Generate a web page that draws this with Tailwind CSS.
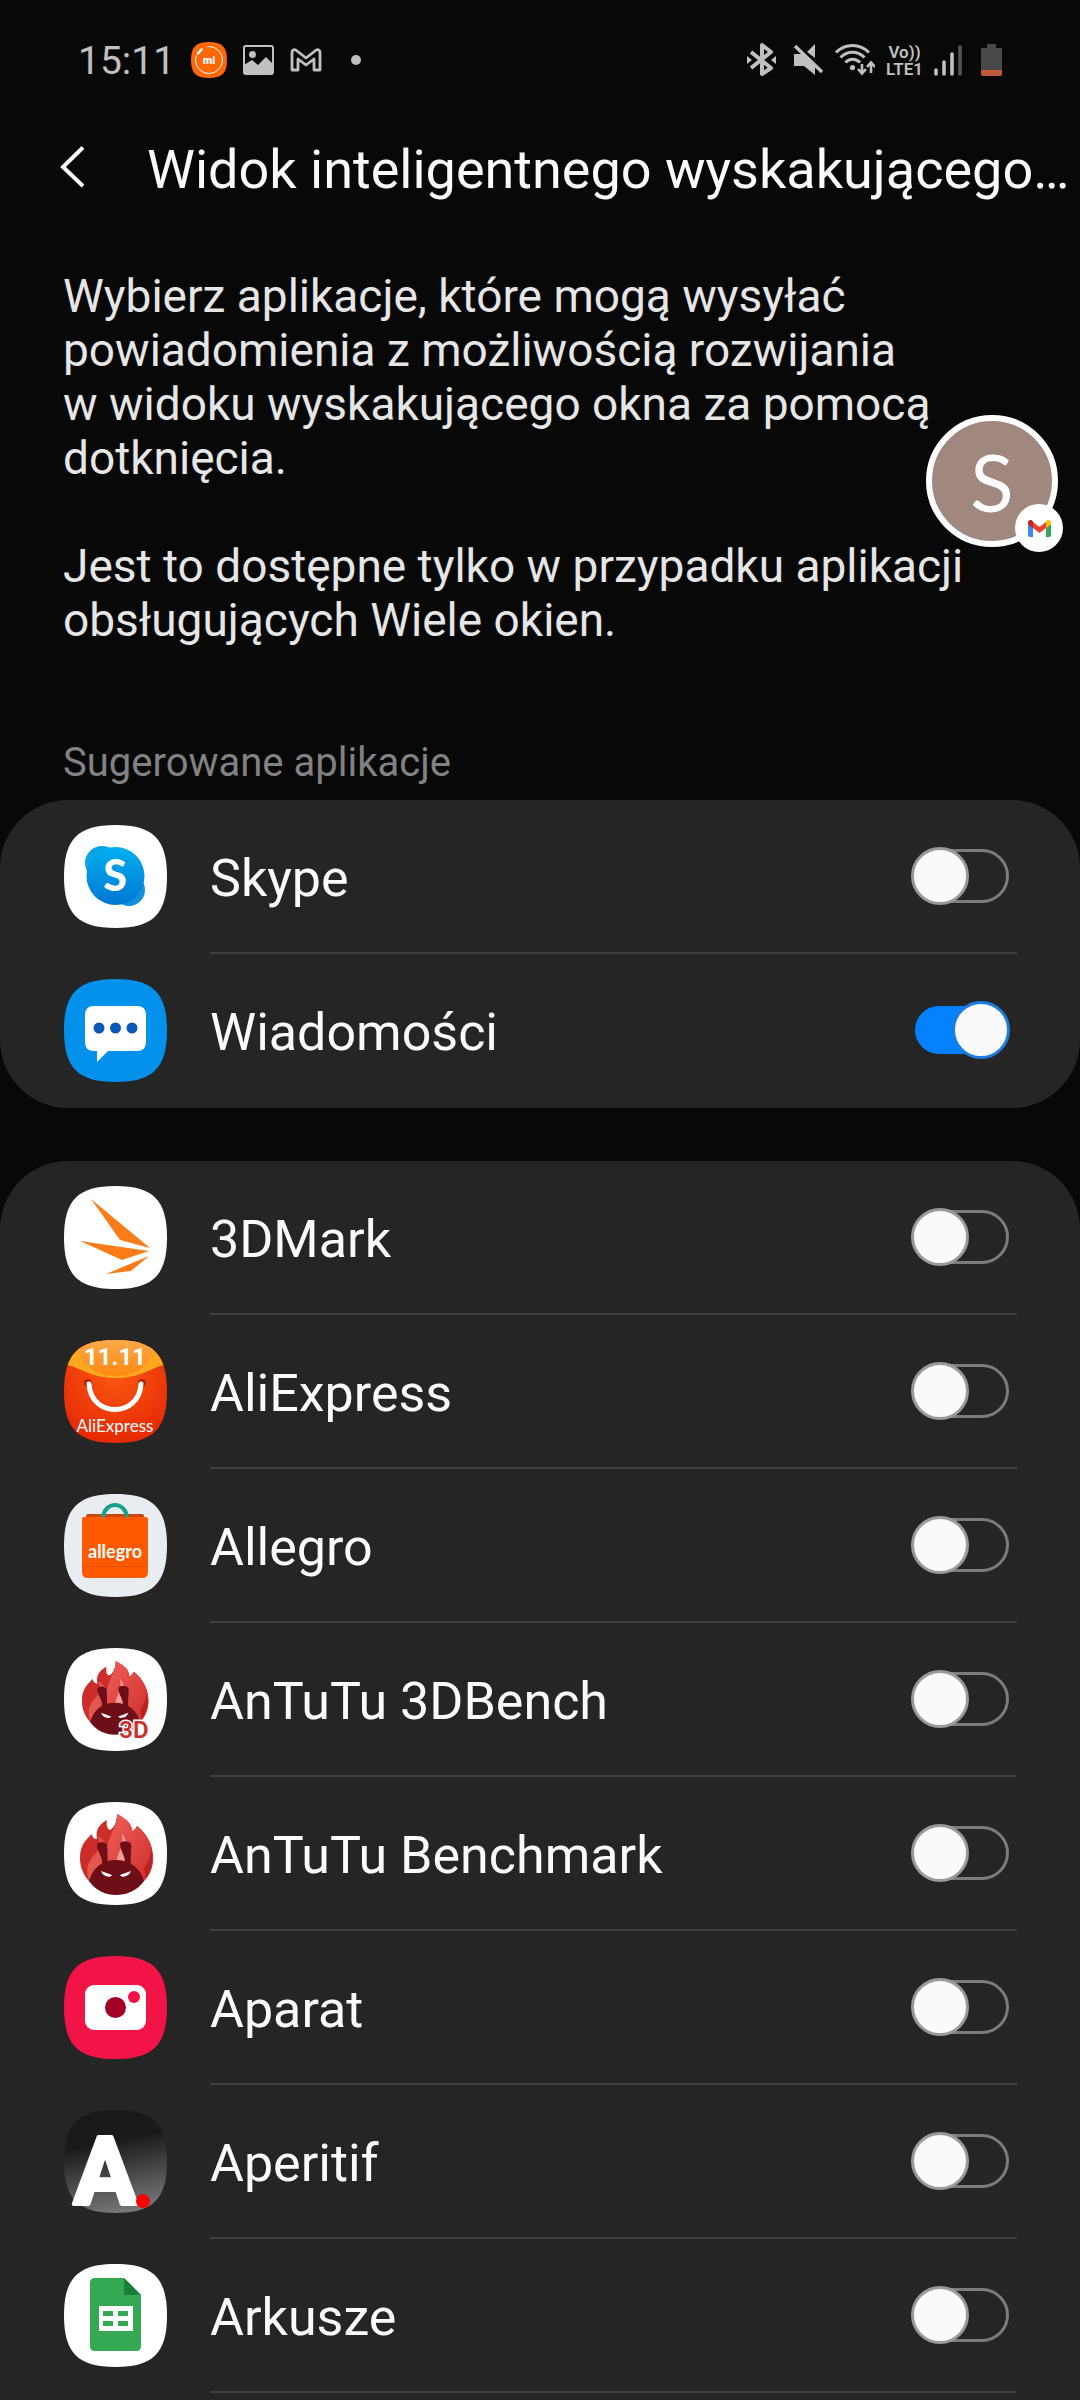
<!DOCTYPE html>
<html lang="pl">

<head>
  <meta charset="UTF-8">
  <meta name="viewport" content="width=device-width, initial-scale=1.0">
  <title>Widok inteligentnego wyskakującego okna</title>
  <script src="https://cdn.jsdelivr.net/npm/@tailwindcss/browser@4"></script>
</head>

<body class="bg-[#080808] font-[Roboto,sans-serif] text-[#fafafa]">
  <!-- Shared shapes -->
  <svg class="absolute w-0 h-0" aria-hidden="true">
    <defs>
      <path id="squircle" d="M51.5 0C89 0 103 14 103 51.5S89 103 51.5 103 0 89 0 51.5 14 0 51.5 0Z" />
      <clipPath id="squircleClip"><use href="#squircle" /></clipPath>
      <linearGradient id="flameRight" x1="0" y1="0" x2="1" y2="1">
        <stop offset="0" stop-color="#f0605a" />
        <stop offset="1" stop-color="#cf2f2c" />
      </linearGradient>
      <g id="antutu">
        <path fill="#cc2d29" d="M53 12C62 17 68 21 68 29C71 28 72 26 73 24C82 31 89 42 89 56C89 66 85 74 79 80H26C20 74 16 66 16 56C16 45 20 39 28 32C28 35 30 37 33 37C31 27 36 22 43 18C42 23 43 27 46 28C50 26 53 20 53 12Z" />
        <path fill="url(#flameRight)" d="M53 12C62 17 68 21 68 29C71 28 72 26 73 24C82 31 89 42 89 56C89 66 85 74 79 80H46C34 62 44 42 48 30C51 25 53 20 53 12Z" />
        <path fill="#e4574f" d="M26 80C20 66 25 58 33 50C36 45 36 40 34 34C44 40 47 50 42 62Z" />
        <path fill="#f29c95" d="M52 60C54 50 60 44 58 31C64 42 66 52 60 60Z" />
        <path fill="#b8221f" d="M80 66C86 58 88 50 86 44C90 54 89 66 82 76Z" />
        <path fill="#6e0f18" d="M25 79C29 65 39 58 52 58S76 65 80 79C73 89 62 93 52 93S32 89 25 79Z" />
        <path fill="#6e0f18" d="M33 43C33 39 42 39 43 43C44 49 43 55 44 62H38C39 54 33 50 33 43ZM56 42C57 38 66 39 67 42C68 48 66 54 67 62H61C62 54 56 49 56 42Z" />
        <path fill="#fff" d="M37 69L48 73C47 76 39 75 37 69ZM67 69L56 73C57 76 65 75 67 69Z" />
      </g>
    </defs>
  </svg>

  <div class="relative flex min-h-screen flex-col">
    <!-- Status bar -->
    <div class="flex h-[120px] items-center justify-between px-[78px] text-[#c0c0c0]">
      <div class="flex items-center gap-4">
        <span class="pt-[3px] text-[39px]">15:11</span>
        <svg class="h-9 w-9" viewBox="0 0 36 36">
          <path fill="#ff6709" d="M18 0C31 0 36 5 36 18S31 36 18 36 0 31 0 18 5 0 18 0Z" />
          <circle cx="18" cy="18" r="13.500" fill="none" stroke="#fff" stroke-width="1" />
          <path stroke="#ff6709" stroke-width="5" d="M5 13L15 3" />
          <path stroke="#fff" stroke-width="2.600" stroke-linecap="round" d="M7 11.500L10.500 7.500" />
          <text x="18" y="22" text-anchor="middle" fill="#fff" font-size="11" font-weight="900">mi</text>
        </svg>
        <svg class="h-[30px] w-[31px]" viewBox="0 0 31 30">
          <rect x="1" y="1" width="29" height="28" rx="2" fill="none" stroke="currentColor" stroke-width="2" />
          <circle cx="9.500" cy="9.500" r="3.500" fill="currentColor" />
          <path fill="currentColor" d="M1 20L9 15L15 20L23 12L30 19V29H1Z" />
        </svg>
        <svg class="h-6 w-8" viewBox="0 0 32 24">
          <path fill="none" stroke="currentColor" stroke-width="2.800" stroke-linejoin="round" d="M2 22V5C2 1 5 1 7 3L16 10L25 3C27 1 30 1 30 5V22H24V11L16 17L8 11V22Z" />
        </svg>
        <svg class="h-[10px] w-9" viewBox="0 0 36 10"><circle cx="18" cy="5" r="5" fill="currentColor" /></svg>
      </div>
      <div class="flex items-center gap-[10px]">
        <svg class="h-[34px] w-[34px]" viewBox="0 0 34 34">
          <path fill="none" stroke="currentColor" stroke-width="4" stroke-linejoin="round" d="M4 9L24 25L15 31V2L24 9L4 25" />
          <path fill="currentColor" d="M0 13L5 17L0 21ZM29 13V21L24 17Z" />
        </svg>
        <svg class="h-[34px] w-[34px]" viewBox="0 0 34 34">
          <path fill="currentColor" d="M3 11H11L24 24V32L13 23H3ZM24 1V15L16 9Z" />
          <path stroke="currentColor" stroke-width="3.400" d="M4 3L31 29" />
        </svg>
        <svg class="h-[34px] w-10" viewBox="0 0 40 34">
          <g fill="none" stroke="currentColor" stroke-width="3">
            <path d="M1 9.500C10 0 25 0 34 9.500M5.500 14.500C12 7.500 23 7.500 29.500 14.500M10.500 19.500C14 15 21 15 25 19.500" />
          </g>
          <circle cx="17.500" cy="24.500" r="2.600" fill="currentColor" />
          <path fill="none" stroke="currentColor" stroke-width="2.600" d="M27 21V30M23 26L27 30.500L31 26M36 30V20M32 24L36 19.500L40 24" />
        </svg>
        <div class="w-[39px] pt-[2px] text-center text-[17px] leading-[17px] font-semibold">Vo))<br>LTE1</div>
        <svg class="h-[34px] w-[37px]" viewBox="0 0 37 34">
          <path stroke="currentColor" stroke-width="3.600" stroke-linecap="round" d="M2 27V31M10 19V31M18 11V31" />
          <path stroke="#555" stroke-width="3.600" stroke-linecap="round" d="M26 4V31" />
        </svg>
        <svg class="h-[34px] w-[21px]" viewBox="0 0 21 34">
          <path fill="#484848" d="M6 1H15V5H21V28H0V5H6Z" />
          <path fill="#c05a38" d="M0 27H21V31Q21 33 19 33H2Q0 33 0 31Z" />
        </svg>
      </div>
    </div>

    <!-- Title -->
    <header class="flex h-[98px] items-center gap-[27px] pr-2 pl-6">
      <button type="button" aria-label="Wstecz" class="flex h-24 w-24 shrink-0 items-center justify-center pb-1">
        <svg class="h-[42px] w-6" viewBox="0 0 24 42">
          <path fill="none" stroke="currentColor" stroke-width="4" d="M23 1.500L3 21L23 40" />
        </svg>
      </button>
      <h1 class="text-[54px] whitespace-nowrap">Widok inteligentnego wyskakującego…</h1>
    </header>

    <main class="flex grow flex-col">
      <div class="mt-[51px] px-[63px] text-[46px] leading-[54px] text-[#e6e6e6]">
        <p>Wybierz aplikacje, które mogą wysyłać powiadomienia z&nbsp;możliwością rozwijania w&nbsp;widoku wyskakującego okna za pomocą dotknięcia.</p>
        <p class="mt-[54px]">Jest to dostępne tylko w przypadku aplikacji obsługujących Wiele okien.</p>
      </div>

      <h2 class="mt-[92px] px-[63px] pb-[13px] text-[40px] leading-12 text-[#828282]">Sugerowane aplikacje</h2>

      <!-- Suggested apps -->
      <ul class="rounded-[68px] bg-[#252525]">
        <li class="flex h-[154px] items-center gap-[43px] pr-[63px] pl-16">
          <svg class="mb-[2px] h-[103px] w-[103px] shrink-0" viewBox="0 0 103 103">
            <defs>
              <linearGradient id="skype" x1="0" y1="0" x2="0" y2="1">
                <stop offset="0" stop-color="#00b0ee" />
                <stop offset="1" stop-color="#0076d4" />
              </linearGradient>
            </defs>
            <use href="#squircle" fill="#fff" />
            <circle cx="38" cy="38" r="17" fill="#0aa5e4" />
            <circle cx="65" cy="65" r="16" fill="#1191dc" />
            <circle cx="51.500" cy="51" r="29" fill="url(#skype)" />
            <text x="51" y="66" text-anchor="middle" fill="#fff" font-size="43" font-weight="900" font-family="Lato">S</text>
          </svg>
          <div class="flex h-full grow items-center justify-between border-b-2 border-[#3f3f3f] pr-2">
            <label for="skypeToggle" class="pt-[6px] text-[52px]">Skype</label>
            <input type="checkbox" role="switch" id="skypeToggle"
              class="relative h-[54px] w-[97px] appearance-none rounded-full border-3 border-[#7c7c7c] before:absolute before:-top-[5px] before:-left-1 before:h-[58px] before:w-[58px] before:rounded-full before:border-3 before:border-[#999] before:bg-[#fafafa] checked:border-transparent checked:bg-[#0381fe] checked:bg-clip-padding checked:before:left-[37px] checked:before:border-[#1c7ce0]">
          </div>
        </li>
        <li class="flex h-[154px] items-center gap-[43px] pr-[63px] pl-16">
          <svg class="mb-[2px] h-[103px] w-[103px] shrink-0" viewBox="0 0 103 103">
            <use href="#squircle" fill="#0391ec" />
            <path fill="#fff" d="M30 27H73Q82 27 82 36V63Q82 72 73 72H44L33 83V72H30Q21 72 21 63V36Q21 27 30 27Z" />
            <g fill="#0b58b8">
              <circle cx="35" cy="49" r="5.500" />
              <circle cx="51.500" cy="49" r="5.500" />
              <circle cx="68" cy="49" r="5.500" />
            </g>
          </svg>
          <div class="flex h-full grow items-center justify-between border-b-2 border-transparent pr-2">
            <label for="messagesToggle" class="pt-[6px] text-[52px]">Wiadomości</label>
            <input type="checkbox" role="switch" id="messagesToggle" checked
              class="relative h-[54px] w-[97px] appearance-none rounded-full border-3 border-[#7c7c7c] before:absolute before:-top-[5px] before:-left-1 before:h-[58px] before:w-[58px] before:rounded-full before:border-3 before:border-[#999] before:bg-[#fafafa] checked:border-transparent checked:bg-[#0381fe] checked:bg-clip-padding checked:before:left-[37px] checked:before:border-[#1c7ce0]">
          </div>
        </li>
      </ul>

      <!-- All apps -->
      <ul class="mt-[53px] grow rounded-t-[68px] bg-[#252525]">
        <li class="flex h-[154px] items-center gap-[43px] pr-[63px] pl-16">
          <svg class="mb-[2px] h-[103px] w-[103px] shrink-0" viewBox="0 0 103 103">
            <use href="#squircle" fill="#fff" />
            <path fill="#fb7d1a" d="M27 13L86 62L56 54ZM16 55L85 65L58 74ZM85 70L67 85L42 88Z" />
          </svg>
          <div class="flex h-full grow items-center justify-between border-b-2 border-[#3f3f3f] pr-2">
            <label for="threeDMarkToggle" class="pt-[6px] text-[52px]">3DMark</label>
            <input type="checkbox" role="switch" id="threeDMarkToggle"
              class="relative h-[54px] w-[97px] appearance-none rounded-full border-3 border-[#7c7c7c] before:absolute before:-top-[5px] before:-left-1 before:h-[58px] before:w-[58px] before:rounded-full before:border-3 before:border-[#999] before:bg-[#fafafa] checked:border-transparent checked:bg-[#0381fe] checked:bg-clip-padding checked:before:left-[37px] checked:before:border-[#1c7ce0]">
          </div>
        </li>
        <li class="flex h-[154px] items-center gap-[43px] pr-[63px] pl-16">
          <svg class="mb-[2px] h-[103px] w-[103px] shrink-0" viewBox="0 0 103 103">
            <defs>
              <radialGradient id="aliRed" cx=".5" cy=".3" r=".7">
                <stop offset="0" stop-color="#fb5a12" />
                <stop offset="1" stop-color="#e62a05" />
              </radialGradient>
              <linearGradient id="aliTop" x1="0" y1="0" x2="0" y2="1">
                <stop offset="0" stop-color="#fba84a" />
                <stop offset="1" stop-color="#fd8a10" />
              </linearGradient>
            </defs>
            <g clip-path="url(#squircleClip)">
              <path fill="url(#aliRed)" d="M0 0H103V103H0Z" />
              <path fill="#ffa71f" d="M0 0H103V25C92 24 80 38 52 38S12 24 0 25Z" />
              <path fill="url(#aliTop)" d="M10 0H93C88 20 78 36 52 36S16 20 10 0Z" />
            </g>
            <text x="51" y="25" text-anchor="middle" fill="#fff" font-size="24" font-weight="700">11.11</text>
            <circle cx="24" cy="43" r="4" fill="#b52206" />
            <circle cx="78" cy="43" r="4" fill="#b52206" />
            <path fill="none" stroke="#fff" stroke-width="5" stroke-linecap="round" d="M25 44C27 78 75 78 77 44" />
            <text x="51" y="92" text-anchor="middle" fill="#fff" font-size="17" font-family="Lato">AliExpress</text>
          </svg>
          <div class="flex h-full grow items-center justify-between border-b-2 border-[#3f3f3f] pr-2">
            <label for="aliToggle" class="pt-[6px] text-[52px]">AliExpress</label>
            <input type="checkbox" role="switch" id="aliToggle"
              class="relative h-[54px] w-[97px] appearance-none rounded-full border-3 border-[#7c7c7c] before:absolute before:-top-[5px] before:-left-1 before:h-[58px] before:w-[58px] before:rounded-full before:border-3 before:border-[#999] before:bg-[#fafafa] checked:border-transparent checked:bg-[#0381fe] checked:bg-clip-padding checked:before:left-[37px] checked:before:border-[#1c7ce0]">
          </div>
        </li>
        <li class="flex h-[154px] items-center gap-[43px] pr-[63px] pl-16">
          <svg class="mb-[2px] h-[103px] w-[103px] shrink-0" viewBox="0 0 103 103">
            <use href="#squircle" fill="#e9edf1" />
            <path fill="#c9480a" d="M22 22Q22 20 24 20H78Q80 20 80 22V26H22Z" />
            <path fill="#ff5a00" d="M18 25Q18 23 20 23H82Q84 23 84 25V78Q84 84 78 84H24Q18 84 18 78Z" />
            <path stroke="#e55100" d="M18 72.500H84" />
            <path fill="none" stroke="#17a08a" stroke-width="4" d="M39 23C41 7 61 7 63 23" />
            <text x="51" y="64" text-anchor="middle" fill="#fff" font-size="18" font-weight="700" font-family="Lato">allegro</text>
          </svg>
          <div class="flex h-full grow items-center justify-between border-b-2 border-[#3f3f3f] pr-2">
            <label for="allegroToggle" class="pt-[6px] text-[52px]">Allegro</label>
            <input type="checkbox" role="switch" id="allegroToggle"
              class="relative h-[54px] w-[97px] appearance-none rounded-full border-3 border-[#7c7c7c] before:absolute before:-top-[5px] before:-left-1 before:h-[58px] before:w-[58px] before:rounded-full before:border-3 before:border-[#999] before:bg-[#fafafa] checked:border-transparent checked:bg-[#0381fe] checked:bg-clip-padding checked:before:left-[37px] checked:before:border-[#1c7ce0]">
          </div>
        </li>
        <li class="flex h-[154px] items-center gap-[43px] pr-[63px] pl-16">
          <svg class="mb-[2px] h-[103px] w-[103px] shrink-0" viewBox="0 0 103 103">
            <use href="#squircle" fill="#fff" />
            <use href="#antutu" transform="translate(3.400 2) scale(.91)" />
            <text x="70" y="90" text-anchor="middle" fill="#cb2f2c" stroke="#fff" stroke-width="3" paint-order="stroke" font-size="24" font-weight="600">3D</text>
          </svg>
          <div class="flex h-full grow items-center justify-between border-b-2 border-[#3f3f3f] pr-2">
            <label for="antutu3dToggle" class="pt-[6px] text-[52px]">AnTuTu 3DBench</label>
            <input type="checkbox" role="switch" id="antutu3dToggle"
              class="relative h-[54px] w-[97px] appearance-none rounded-full border-3 border-[#7c7c7c] before:absolute before:-top-[5px] before:-left-1 before:h-[58px] before:w-[58px] before:rounded-full before:border-3 before:border-[#999] before:bg-[#fafafa] checked:border-transparent checked:bg-[#0381fe] checked:bg-clip-padding checked:before:left-[37px] checked:before:border-[#1c7ce0]">
          </div>
        </li>
        <li class="flex h-[154px] items-center gap-[43px] pr-[63px] pl-16">
          <svg class="mb-[2px] h-[103px] w-[103px] shrink-0" viewBox="0 0 103 103">
            <use href="#squircle" fill="#fff" />
            <use href="#antutu" />
          </svg>
          <div class="flex h-full grow items-center justify-between border-b-2 border-[#3f3f3f] pr-2">
            <label for="antutuToggle" class="pt-[6px] text-[52px]">AnTuTu Benchmark</label>
            <input type="checkbox" role="switch" id="antutuToggle"
              class="relative h-[54px] w-[97px] appearance-none rounded-full border-3 border-[#7c7c7c] before:absolute before:-top-[5px] before:-left-1 before:h-[58px] before:w-[58px] before:rounded-full before:border-3 before:border-[#999] before:bg-[#fafafa] checked:border-transparent checked:bg-[#0381fe] checked:bg-clip-padding checked:before:left-[37px] checked:before:border-[#1c7ce0]">
          </div>
        </li>
        <li class="flex h-[154px] items-center gap-[43px] pr-[63px] pl-16">
          <svg class="mb-[2px] h-[103px] w-[103px] shrink-0" viewBox="0 0 103 103">
            <use href="#squircle" fill="#f21347" />
            <rect x="21" y="29" width="61" height="45" rx="9" fill="#fff" />
            <circle cx="51.500" cy="51.500" r="10.500" fill="#a20028" />
            <circle cx="70" cy="41" r="6" fill="#f21347" />
          </svg>
          <div class="flex h-full grow items-center justify-between border-b-2 border-[#3f3f3f] pr-2">
            <label for="cameraToggle" class="pt-[6px] text-[52px]">Aparat</label>
            <input type="checkbox" role="switch" id="cameraToggle"
              class="relative h-[54px] w-[97px] appearance-none rounded-full border-3 border-[#7c7c7c] before:absolute before:-top-[5px] before:-left-1 before:h-[58px] before:w-[58px] before:rounded-full before:border-3 before:border-[#999] before:bg-[#fafafa] checked:border-transparent checked:bg-[#0381fe] checked:bg-clip-padding checked:before:left-[37px] checked:before:border-[#1c7ce0]">
          </div>
        </li>
        <li class="flex h-[154px] items-center gap-[43px] pr-[63px] pl-16">
          <svg class="mb-[2px] h-[103px] w-[103px] shrink-0" viewBox="0 0 103 103">
            <defs>
              <linearGradient id="aperitif" x1=".4" y1="0" x2=".6" y2="1">
                <stop offset=".3" stop-color="#1a1a1b" />
                <stop offset="1" stop-color="#77797b" />
              </linearGradient>
            </defs>
            <use href="#squircle" fill="url(#aperitif)" />
            <text x="41" y="94" text-anchor="middle" fill="#fff" stroke="#fff" stroke-width="4" stroke-linejoin="round" font-size="94" font-weight="700">A</text>
            <circle cx="79" cy="91" r="7" fill="#f00" />
          </svg>
          <div class="flex h-full grow items-center justify-between border-b-2 border-[#3f3f3f] pr-2">
            <label for="aperitifToggle" class="pt-[6px] text-[52px]">Aperitif</label>
            <input type="checkbox" role="switch" id="aperitifToggle"
              class="relative h-[54px] w-[97px] appearance-none rounded-full border-3 border-[#7c7c7c] before:absolute before:-top-[5px] before:-left-1 before:h-[58px] before:w-[58px] before:rounded-full before:border-3 before:border-[#999] before:bg-[#fafafa] checked:border-transparent checked:bg-[#0381fe] checked:bg-clip-padding checked:before:left-[37px] checked:before:border-[#1c7ce0]">
          </div>
        </li>
        <li class="flex h-[154px] items-center gap-[43px] pr-[63px] pl-16">
          <svg class="mb-[2px] h-[103px] w-[103px] shrink-0" viewBox="0 0 103 103">
            <use href="#squircle" fill="#fff" />
            <path fill="#34a853" d="M31 14H60L77 31V82Q77 87 72 87H31Q26 87 26 82V19Q26 14 31 14Z" />
            <path fill="#188038" d="M60 14L77 31H60Z" />
            <path fill="#fff" fill-rule="evenodd" d="M35 42H69V67H35ZM39 47V52H49V47ZM54 47V52H64V47ZM39 57V62H49V57ZM54 57V62H64V57Z" />
          </svg>
          <div class="flex h-full grow items-center justify-between border-b-2 border-[#3f3f3f] pr-2">
            <label for="sheetsToggle" class="pt-[6px] text-[52px]">Arkusze</label>
            <input type="checkbox" role="switch" id="sheetsToggle"
              class="relative h-[54px] w-[97px] appearance-none rounded-full border-3 border-[#7c7c7c] before:absolute before:-top-[5px] before:-left-1 before:h-[58px] before:w-[58px] before:rounded-full before:border-3 before:border-[#999] before:bg-[#fafafa] checked:border-transparent checked:bg-[#0381fe] checked:bg-clip-padding checked:before:left-[37px] checked:before:border-[#1c7ce0]">
          </div>
        </li>
      </ul>
    </main>

    <!-- Floating notification bubble -->
    <button type="button" aria-label="Powiadomienie Gmail"
      class="absolute top-[415px] right-[22px] flex h-[132px] w-[132px] items-center justify-center rounded-full border-6 border-white bg-[#a1887f]">
      <span class="font-[Lato,sans-serif] text-[80px] leading-none text-white">S</span>
      <span class="absolute -right-[11px] -bottom-[11px] flex h-12 w-12 items-center justify-center rounded-full bg-white">
        <svg class="h-[17px] w-[23px]" viewBox="0 0 23 17">
          <path fill="#4285f4" d="M0 4L5 7V17H2Q0 17 0 15Z" />
          <path fill="#34a853" d="M23 4L18 7V17H21Q23 17 23 15Z" />
          <path fill="#ea4335" d="M5 2L11.500 7L18 2V8L11.500 13L5 8Z" />
          <path fill="#c5221f" d="M0 3C0 0 3 -1 5 1.500V8L0 4.500Z" />
          <path fill="#fbbc04" d="M23 3C23 0 20 -1 18 1.500V8L23 4.500Z" />
        </svg>
      </span>
    </button>
  </div>
</body>

</html>
